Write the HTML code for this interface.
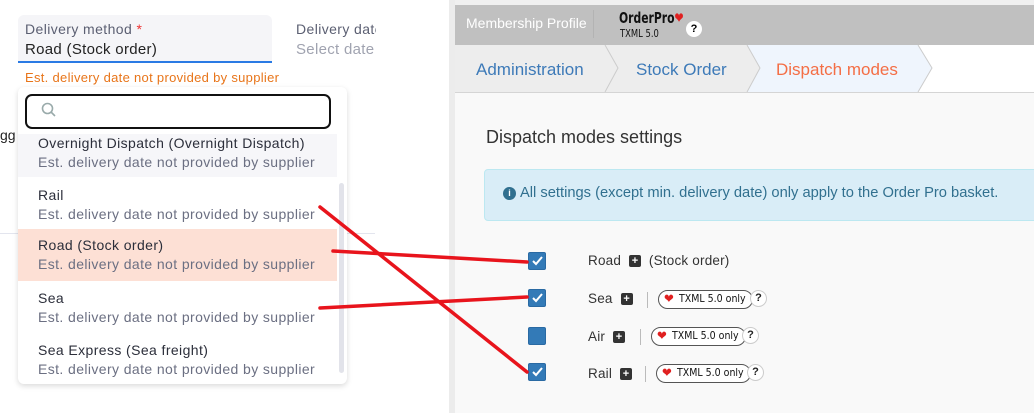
<!DOCTYPE html>
<html><head><meta charset="utf-8"><style>
*{box-sizing:border-box;margin:0;padding:0}
body{width:1034px;height:413px;overflow:hidden;background:#fff;font-family:"Liberation Sans",sans-serif;position:relative}
.a{position:absolute}
.sub{color:#6b6f82;font-size:14px}
.opt{position:absolute;left:18px;width:319px;height:52px;padding:7px 0 0 20px;font-size:14px;color:#2b2e3a;line-height:19px;letter-spacing:.4px;white-space:nowrap}
.cb{position:absolute;left:528px;width:18px;height:18px;background:#337ab7;border-radius:2px;border:1px solid #2a6aa3}
.cb svg{position:absolute;left:3px;top:3px}
.lbl{position:absolute;font-size:13.5px;color:#333;letter-spacing:.2px}
.plus{display:inline-block;width:12px;height:12px;background:#333;border-radius:2px;color:#fff;font-size:11px;line-height:12px;text-align:center;font-weight:bold;vertical-align:1px;letter-spacing:0}
.pill{position:absolute;height:19px;border:1px solid #555;border-radius:10px;font-size:10.5px;line-height:17px;padding:0 6px 0 20px;color:#111;font-family:"DejaVu Sans Condensed","Liberation Sans",sans-serif;background:#fff;white-space:nowrap}
.pill i{position:absolute;left:5px;top:0;color:#e02020;font-style:normal;font-size:13px}
.q{position:absolute;width:17px;height:17px;border-radius:50%;background:#fff;border:1px solid #ccc;font-size:11px;font-weight:bold;text-align:center;line-height:15px;color:#222}
.sep{position:absolute;width:1px;height:16px;background:#bbb}
</style></head><body>
<!-- left -->
<div class="a" style="left:18px;top:15px;width:254px;height:48px;background:#f5f5f8;border-radius:6px 6px 0 0;border-bottom:2px solid #2a7ae4"></div>
<div class="a" style="left:25px;top:21px;font-size:14px;color:#5b5f72;letter-spacing:.4px">Delivery method <span style="color:#e33">*</span></div>
<div class="a" style="left:25px;top:41px;font-size:15px;color:#222;letter-spacing:.3px">Road (Stock order)</div>
<div class="a" style="left:296px;top:21px;font-size:14px;color:#5b5f72;width:80px;overflow:hidden;white-space:nowrap;letter-spacing:.4px">Delivery date</div>
<div class="a" style="left:296px;top:41px;font-size:15px;color:#a0a3b0;letter-spacing:.3px">Select date</div>
<div class="a" style="left:25px;top:70px;font-size:13px;color:#e8751a;letter-spacing:.3px">Est. delivery date not provided by supplier</div>
<div class="a" style="left:0;top:127px;font-size:14px;color:#222">gg</div>
<div class="a" style="left:0;top:233px;width:375px;height:1px;background:#e3e5ee"></div>
<div class="a" style="left:18px;top:87px;width:329px;height:297px;background:#fff;border-radius:6px;box-shadow:0 2px 6px rgba(0,0,0,.15)"></div>
<div class="a" style="left:18px;top:134px;width:319px;height:43px;background:#f6f6f9"></div>
<div class="opt" style="top:127px">Overnight Dispatch (Overnight Dispatch)<br><span class="sub">Est. delivery date not provided by supplier</span></div>
<div class="opt" style="top:179px">Rail<br><span class="sub">Est. delivery date not provided by supplier</span></div>
<div class="opt" style="top:229px;background:#fde0d5">Road (Stock order)<br><span class="sub">Est. delivery date not provided by supplier</span></div>
<div class="opt" style="top:282px">Sea<br><span class="sub">Est. delivery date not provided by supplier</span></div>
<div class="opt" style="top:334px">Sea Express (Sea freight)<br><span class="sub">Est. delivery date not provided by supplier</span></div>
<div class="a" style="left:339px;top:183px;width:5px;height:190px;background:#e2e3ea;border-radius:3px"></div>
<div class="a" style="left:25px;top:94px;width:306px;height:35px;border:2px solid #111;border-radius:7px;background:#fff"></div>
<svg class="a" style="left:41px;top:102px" width="16" height="16"><circle cx="6.5" cy="6.5" r="5" fill="none" stroke="#9aa" stroke-width="1.6"/><line x1="10" y1="10" x2="14" y2="14" stroke="#9aa" stroke-width="1.6"/></svg>
<div class="a" style="left:449px;top:0;width:6px;height:413px;background:#ececec"></div>
<!-- right -->
<div class="a" style="left:455px;top:0;width:579px;height:413px;background:#f9f9f9"></div>
<div class="a" style="left:455px;top:0;width:579px;height:5px;background:#f0f0f0"></div>
<div class="a" style="left:455px;top:5px;width:579px;height:40px;background:#c0c0c0"></div>
<div class="a" style="left:466px;top:15px;font-size:14px;color:#fff">Membership Profile</div>
<div class="a" style="left:593px;top:10px;width:1px;height:28px;background:#b3b3b3"></div>
<div class="a" style="left:619px;top:9px;font-size:15px;font-weight:bold;color:#111;font-family:'DejaVu Sans Condensed',sans-serif;transform:scaleX(.8);transform-origin:left">OrderPro<span style="color:#e02020">❤</span></div>
<div class="a" style="left:620px;top:27px;font-size:11px;color:#111;font-family:'DejaVu Sans Condensed',sans-serif;transform:scaleX(.85);transform-origin:left">TXML 5.0</div>
<div class="a" style="left:686px;top:21px;width:16px;height:16px;border-radius:50%;background:#fff;font-size:11px;font-weight:bold;text-align:center;line-height:16px">?</div>
<div class="a" style="left:455px;top:45px;width:579px;height:48px;background:#fff;border-bottom:1px solid #d5d5d5"></div>
<svg class="a" style="left:455px;top:45px" width="579" height="47">
<polygon points="0,0 292,0 305,23 292,47 0,47" fill="#ededed"/>
<polygon points="292,0 463,0 477,23 463,47 292,47 305,23" fill="#eff5fd"/>
<polyline points="150,0 163,23 150,47" fill="none" stroke="#ccc"/>
<polyline points="292,0 305,23 292,47" fill="none" stroke="#ccc"/>
<polyline points="463,0 477,23 463,47" fill="none" stroke="#ccc"/>
</svg>
<div class="a" style="left:476px;top:60px;font-size:17px;color:#3d7ab8">Administration</div>
<div class="a" style="left:636px;top:60px;font-size:17px;color:#3d7ab8">Stock Order</div>
<div class="a" style="left:776px;top:60px;font-size:17px;color:#f46e45">Dispatch modes</div>
<div class="a" style="left:486px;top:127px;font-size:18px;color:#333">Dispatch modes settings</div>
<div class="a" style="left:484px;top:169px;width:560px;height:52px;background:#d9edf7;border:1px solid #bce8f1;border-radius:4px"></div>
<div class="a" style="left:503px;top:187px;width:13px;height:13px;border-radius:50%;background:#31708f;color:#fff;font-size:9px;text-align:center;line-height:13px;font-weight:bold">i</div>
<div class="a" style="left:520px;top:185px;font-size:14.7px;color:#31708f">All settings (except min. delivery date) only apply to the Order Pro basket.</div>

<div class="cb" style="top:252px"><svg width="11" height="10"><polyline points="1,5 4,8 10,1" fill="none" stroke="#fff" stroke-width="2"/></svg></div>
<div class="cb" style="top:289px"><svg width="11" height="10"><polyline points="1,5 4,8 10,1" fill="none" stroke="#fff" stroke-width="2"/></svg></div>
<div class="cb" style="top:327px"></div>
<div class="cb" style="top:363px"><svg width="11" height="10"><polyline points="1,5 4,8 10,1" fill="none" stroke="#fff" stroke-width="2"/></svg></div>

<div class="lbl" style="left:588px;top:253px">Road &nbsp;<span class="plus">+</span>&nbsp; (Stock order)</div>
<div class="lbl" style="left:588px;top:291px">Sea &nbsp;<span class="plus">+</span></div>
<div class="sep" style="left:647px;top:292px"></div>
<div class="pill" style="left:658px;top:290px"><i>❤</i>TXML 5.0 only</div>
<div class="q" style="left:750px;top:290px">?</div>
<div class="lbl" style="left:588px;top:329px">Air &nbsp;<span class="plus">+</span></div>
<div class="sep" style="left:640px;top:329px"></div>
<div class="pill" style="left:651px;top:327px"><i>❤</i>TXML 5.0 only</div>
<div class="q" style="left:742px;top:327px">?</div>
<div class="lbl" style="left:588px;top:366px">Rail &nbsp;<span class="plus">+</span></div>
<div class="sep" style="left:645px;top:366px"></div>
<div class="pill" style="left:656px;top:364px"><i>❤</i>TXML 5.0 only</div>
<div class="q" style="left:747px;top:364px">?</div>

<svg class="a" style="left:0;top:0" width="1034" height="413">
<g stroke="#e8141c" stroke-width="3.5" fill="none" stroke-linecap="round">
<line x1="320" y1="207" x2="527" y2="372"/>
<line x1="333" y1="251" x2="527" y2="262"/>
<line x1="320" y1="308" x2="527" y2="297"/>
</g></svg>
</body></html>
